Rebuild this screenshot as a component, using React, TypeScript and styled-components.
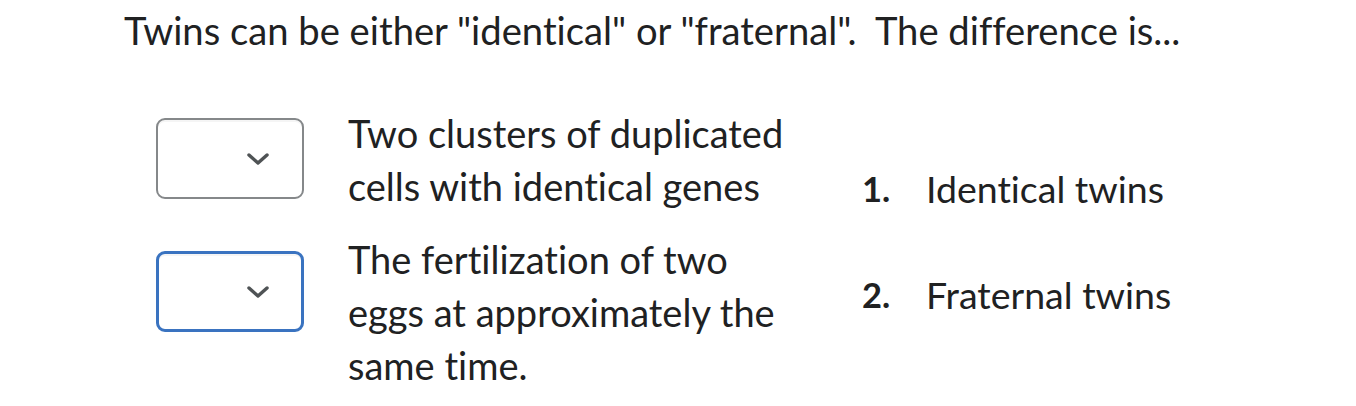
import React from "react";
import styled, { createGlobalStyle } from "styled-components";

const GlobalStyle = createGlobalStyle`
  body {
    margin: 0;
    background: #ffffff;
    font-family: Lato, "Noto Sans", sans-serif;
    font-variant-ligatures: none;
    color: #202122;
  }
`;

const Page = styled.div`
  padding: 7px 0 0 124px;
`;

const Question = styled.p`
  margin: 0;
  font-size: 38.2px;
  line-height: 46px;
`;

const Body = styled.div`
  display: flex;
  margin-top: 54px;
  padding-left: 32px;
`;

const Matches = styled.div`
  display: flex;
  flex-direction: column;
  gap: 20px;
  width: 706px;
`;

const Row = styled.div`
  display: flex;
  align-items: flex-start;
  gap: 44px;
`;

const Select = styled.div<{ $focused?: boolean; $offset: number }>`
  box-sizing: border-box;
  flex: none;
  width: 148px;
  height: 81px;
  margin-top: ${(p) => p.$offset}px;
  border-radius: 9px;
  border: ${(p) => (p.$focused ? "3px solid #3a73c0" : "2px solid #85888a")};
  box-shadow: inset 0 2px 0 rgba(0, 0, 0, 0.04);
  display: flex;
  align-items: center;
  justify-content: flex-end;
  padding-right: ${(p) => (p.$focused ? "32px" : "33px")};
  cursor: pointer;
`;

const Prompt = styled.p`
  margin: 0;
  width: 446px;
  font-size: 38px;
  line-height: 53px;
`;

const Choices = styled.ol`
  list-style: none;
  margin: 59px 0 0;
  padding: 0;
  display: flex;
  flex-direction: column;
  gap: 60px;
`;

const Choice = styled.li`
  display: flex;
  font-size: 37.5px;
  line-height: 46px;
`;

const Number = styled.span`
  width: 64px;
  font-size: 34.5px;
  font-weight: 700;
`;

const Chevron = () => (
  <svg width="22" height="12" viewBox="0 0 22 12" fill="none">
    <path
      d="M2 2l9 8 9-8"
      stroke="#4f5355"
      strokeWidth="3.4"
      strokeLinecap="round"
      strokeLinejoin="round"
    />
  </svg>
);

const matches = [
  { text: "Two clusters of duplicated cells with identical genes", offset: 11 },
  {
    text: "The fertilization of two eggs at approximately the same time.",
    offset: 18,
    focused: true,
  },
];

const choices = ["Identical twins", "Fraternal twins"];

const App = () => {
  return (
    <Page>
      <GlobalStyle />
      <Question>
        Twins can be either "identical" or "fraternal".&nbsp; The difference is...
      </Question>
      <Body>
        <Matches>
          {matches.map((m) => (
            <Row key={m.text}>
              <Select $offset={m.offset} $focused={m.focused}>
                <Chevron />
              </Select>
              <Prompt>{m.text}</Prompt>
            </Row>
          ))}
        </Matches>
        <Choices>
          {choices.map((c, i) => (
            <Choice key={c}>
              <Number>{i + 1}.</Number>
              {c}
            </Choice>
          ))}
        </Choices>
      </Body>
    </Page>
  );
};

export default App;
